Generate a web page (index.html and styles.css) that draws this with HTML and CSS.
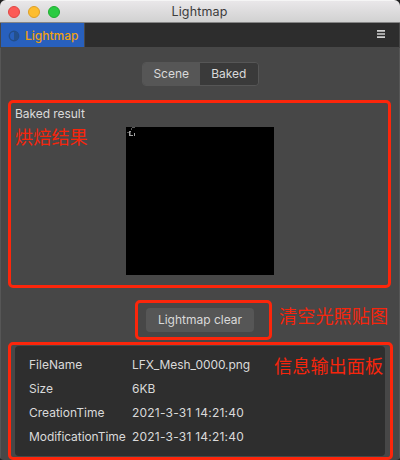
FILE: index.html
```html
<!DOCTYPE html>
<html lang="en">
<head>
<meta charset="utf-8">
<title>Lightmap</title>
<link rel="stylesheet" href="styles.css">
</head>
<body>
<div class="window">
  <header class="titlebar">
    <div class="lights"><i class="light close"></i><i class="light minimize"></i><i class="light expand"></i></div>
    <span class="title">Lightmap</span>
  </header>
  <nav class="tabs">
    <div class="tab">
      <svg class="tab-icon" viewBox="0 0 12 12"><circle cx="6" cy="6" r="4.7" fill="none" stroke="#234d88" stroke-width="1.4"/><path d="M6 1.5a4.5 4.5 0 0 1 0 9z" fill="#24508c"/></svg>
      <span>Lightmap</span>
    </div>
    <svg class="menu" viewBox="0 0 8 8"><path d="M0 .9h8M0 4h8M0 7.1h8" stroke="#d0d0d0" stroke-width="1.6"/></svg>
  </nav>
  <main class="content">
    <div class="segments"><span class="segment">Scene</span><span class="segment active">Baked</span></div>
    <section class="result">
      <h2 class="heading">Baked result</h2>
      <div class="preview">
        <svg class="texture" viewBox="0 0 12 12"><path d="M3 4h2v1H4.5v3H7v1H3zM8 6h1v3H8z" fill="#a0a0a0"/><path d="M5 1h1v2H5zM6 0h3v1H6zM1 5h2v1H1z" fill="#5b5b5b"/></svg>
      </div>
    </section>
    <button class="clear">Lightmap clear</button>
    <dl class="info">
      <dt>FileName</dt><dd class="file">LFX_Mesh_0000.png</dd>
      <dt>Size</dt><dd>6KB</dd>
      <dt>CreationTime</dt><dd class="date">2021-3-31 14:21:40</dd>
      <dt class="long">ModificationTime</dt><dd class="date">2021-3-31 14:21:40</dd>
    </dl>
  </main>
  <div class="frame frame-result"></div>
  <div class="frame frame-clear"></div>
  <div class="frame frame-info"></div>
  <span class="note note-result">烘焙结果</span>
  <span class="note note-clear">清空光照贴图</span>
  <span class="note note-info">信息输出面板</span>
</div>
</body>
</html>
```
FILE: styles.css
```css
* { box-sizing: border-box; }
body { margin: 0; background: #202020; font: 12px/16px Inter, "Liberation Sans", sans-serif; color: #dadada; }
.window { position: relative; width: 400px; height: 460px; overflow: hidden; display: flex; flex-direction: column; background: #474747; border-radius: 6px 6px 4px 4px; }
.titlebar { height: 23px; flex: none; display: grid; grid-template-columns: 1fr auto 1fr; align-items: center; background: linear-gradient(#e9e7e9, #d1d1d1); border-top: 1px solid #f5f5f5; border-bottom: 1px solid #858585; color: #3c3c3c; }
.title { font-size: 12.5px; letter-spacing: .15px; position: relative; left: -.5px; }
.lights { display: flex; gap: 8px; padding-left: 8px; }
.light { width: 12px; height: 12px; border-radius: 50%; border: 1px solid; }
.close { background: #fc5b57; border-color: #df4744; }
.minimize { background: #fdbd2f; border-color: #de9f27; }
.expand { background: #2acb42; border-color: #1fac31; }
.tabs { height: 25px; flex: none; display: flex; justify-content: space-between; align-items: center; margin: 0 1px; padding-right: 14px; background: #2d2d2d; border-bottom: 1px solid #474747; }
.tab { width: 84px; height: 24px; display: flex; align-items: center; gap: 5px; padding: 1px 0 0 7px; background: #2860bd; border-right: 1px solid #484848; color: #f0a010; font-weight: 500; }
.tab-icon { width: 12px; height: 12px; }
.menu { width: 8px; height: 8px; margin-bottom: 3px; }
.content { flex: 1; display: flex; flex-direction: column; align-items: center; border: solid #565656; border-width: 0 1px; padding: 14px 14px 4px; }
.segments { width: 117px; height: 24px; flex: none; display: flex; border: 1px solid #565656; border-radius: 4px; overflow: hidden; }
.segment { flex: 1; text-align: center; line-height: 22px; background: #565656; }
.segment.active { background: #3a3a3a; }
.result { width: 100%; height: 170px; flex: none; margin-top: 20px; display: flex; flex-direction: column; align-items: center; }
.heading { align-self: flex-start; margin: 0 0 5px; font: 12px/16px Inter, sans-serif; letter-spacing: -.05px; }
.preview { width: 148px; height: 148px; background: #000; }
.texture { display: block; width: 12px; height: 12px; }
.clear { width: 108px; height: 24px; flex: none; margin-top: 32px; border: 0; border-radius: 4px; background: #565656; color: inherit; font: inherit; padding: 0; }
.info { width: 370px; height: 110px; flex: none; margin: 14px 0 0; padding: 7px 14px; display: grid; grid-template-columns: 103px 1fr; grid-auto-rows: 24px; line-height: 24px; background: #2e2e2e; border-radius: 4px; }
.info dd { margin: 0; }
.file { letter-spacing: -.08px; }
.date { letter-spacing: .22px; }
.long { letter-spacing: -.07px; }
.frame { position: absolute; border: 3px solid #fc260b; border-radius: 5px; }
.frame-result { left: 8px; top: 100px; width: 383px; height: 188px; }
.frame-clear { left: 135px; top: 300px; width: 137px; height: 40px; }
.frame-info { left: 8px; top: 342px; width: 385px; height: 118px; }
.note { position: absolute; font: 18.2px/24px "Noto Sans CJK SC", sans-serif; color: #f6250c; white-space: nowrap; }
.note-result { left: 15px; top: 124px; }
.note-clear { left: 279px; top: 303px; }
.note-info { left: 274px; top: 353px; }
```
